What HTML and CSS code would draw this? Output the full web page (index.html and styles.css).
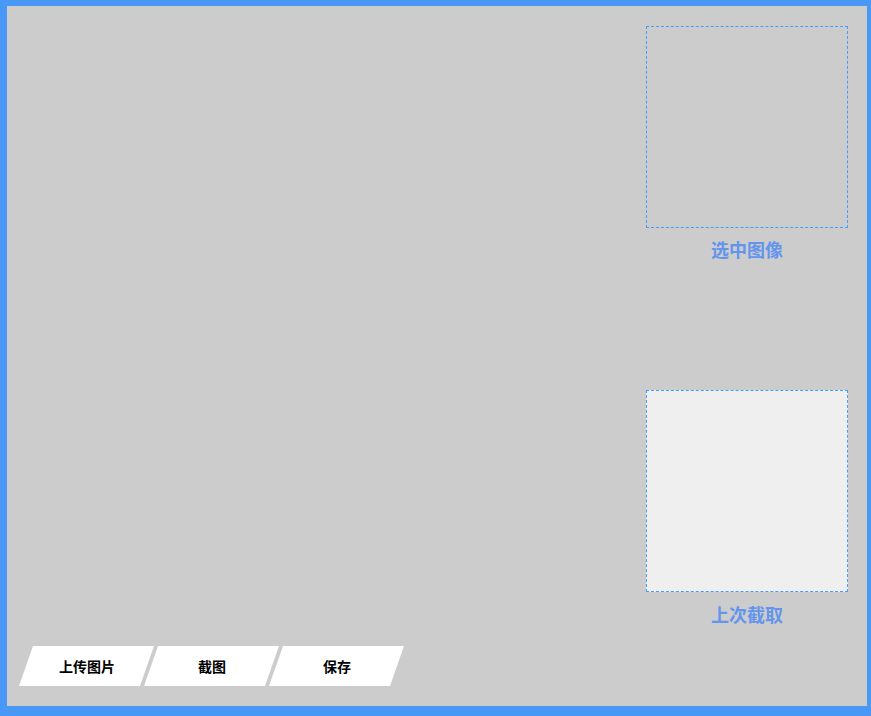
FILE: index.html
```html
<!DOCTYPE html>
<html lang="zh">
<head>
<meta charset="utf-8">
<title>截图</title>
<link rel="stylesheet" href="styles.css">
</head>
<body>
<div class="app">
  <div class="main">
    <div class="toolbar">
      <div class="btn"><span>上传图片</span></div>
      <div class="btn"><span>截图</span></div>
      <div class="btn"><span>保存</span></div>
    </div>
  </div>
  <div class="side">
    <div class="preview"></div>
    <div class="label">选中图像</div>
    <div class="preview last"></div>
    <div class="label second">上次截取</div>
  </div>
</div>
</body>
</html>
```

FILE: styles.css
```css
html, body {
  margin: 0;
  padding: 0;
}
body {
  background: #4a98f6;
  width: 871px;
  height: 716px;
  overflow: hidden;
  font-family: "Noto Sans CJK SC", "Noto Sans", sans-serif;
}
.app {
  margin: 6px 4px 10px 7px;
  width: 860px;
  height: 700px;
  background: #cccccc;
  display: flex;
}
.main {
  flex: 1;
  display: flex;
  flex-direction: column;
  justify-content: flex-end;
  padding: 0 0 20px 19px;
}
.toolbar {
  display: flex;
  gap: 4px;
}
.btn {
  width: 121px;
  height: 40px;
  background: #ffffff;
  transform: skewX(-19.3deg);
  display: flex;
  align-items: center;
  justify-content: center;
}
.btn span {
  transform: skewX(19.3deg);
  font-size: 14px;
  font-weight: bold;
  color: #000;
  line-height: 20px;
}
.side {
  width: 202px;
  margin-right: 19px;
  padding-top: 20px;
  display: flex;
  flex-direction: column;
}
.preview {
  width: 202px;
  height: 202px;
  box-sizing: border-box;
  border: 1px dashed #409eff;
}
.preview.last {
  background: #efefef;
  margin-top: 129px;
}
.label {
  margin-top: 9px;
  line-height: 24px;
  height: 24px;
  text-align: center;
  font-size: 18px;
  font-weight: bold;
  color: #6495ed;
}
.label.second {
  margin-top: 10px;
}
```
